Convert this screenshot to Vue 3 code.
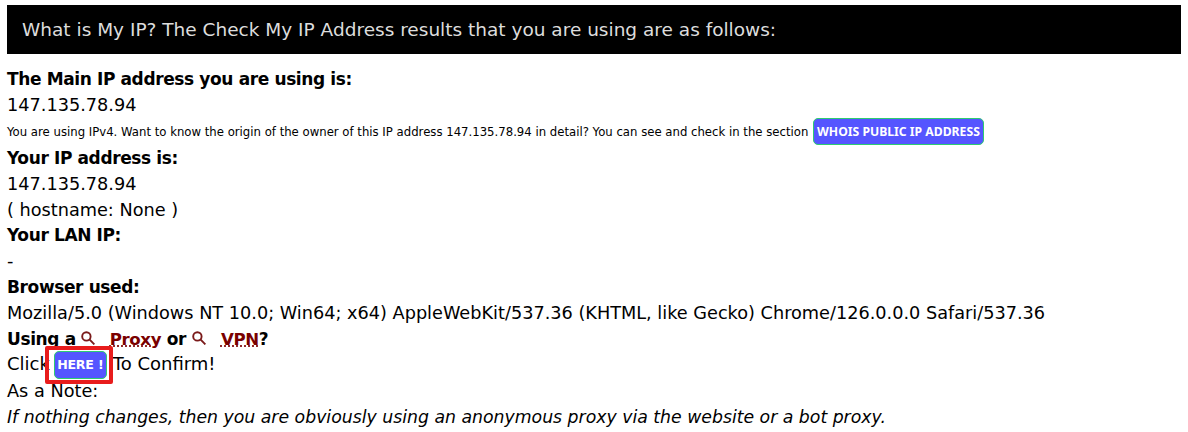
<template>
  <div class="page">
    <h1 class="banner">What is My IP? The Check My IP Address results that you are using are as follows:</h1>
    <div class="line"><b>The Main IP address you are using is:</b></div>
    <div class="line">147.135.78.94</div>
    <div class="line small">
      You are using IPv4. Want to know the origin of the owner of this IP address 147.135.78.94 in detail? You can see and check in the section
      <a class="btn whois">WHOIS PUBLIC IP ADDRESS</a>
    </div>
    <div class="line shift"><b>Your IP address is:</b></div>
    <div class="line shift">147.135.78.94</div>
    <div class="line shift">( hostname: None )</div>
    <div class="line"><b>Your LAN IP:</b></div>
    <div class="line">-</div>
    <div class="line"><b>Browser used:</b></div>
    <div class="line">{{ userAgent }}</div>
    <div class="line">
      <b>Using a</b>
      <template v-for="(term, i) in terms" :key="term">
        <svg class="glass" width="14" height="14" viewBox="0 0 14 14">
          <circle cx="5.4" cy="5.4" r="4.2" />
          <path d="M8.4 8.4 L13.4 13.4" />
        </svg>
        <abbr class="term">{{ term }}</abbr><b>{{ i === 0 ? ' or' : '?' }}</b>
      </template>
    </div>
    <div class="line confirm">
      Click
      <span class="here-wrap">
        <a class="btn here">HERE !</a>
      </span>
      To Confirm!
    </div>
    <div class="line">As a Note:</div>
    <div class="line"><i>If nothing changes, then you are obviously using an anonymous proxy via the website or a bot proxy.</i></div>
  </div>
</template>

<script setup>
const userAgent = 'Mozilla/5.0 (Windows NT 10.0; Win64; x64) AppleWebKit/537.36 (KHTML, like Gecko) Chrome/126.0.0.0 Safari/537.36'
const terms = ['Proxy', 'VPN']
</script>

<style>
body { background: #fff; }
</style>

<style scoped>
.page {
  padding: 5px 7px 0;
  font-family: "DejaVu Sans", sans-serif;
  font-size: 17.7px;
  line-height: 26px;
  color: #000;
}
.banner {
  margin: 0 0 12px;
  padding: 12px 15px;
  background: #000;
  color: #ddd;
  font-size: 18.5px;
  font-weight: normal;
  line-height: 25px;
}
.line { white-space: nowrap; height: 26px; }
.shift { position: relative; top: 1px; }
.confirm { position: relative; top: -1px; font-size: 18px; }
.line b { font-size: 17px; letter-spacing: -0.38px; }
.line i { font-size: 17.3px; }
.small { font-size: 11.7px; line-height: 24px; }
.btn {
  display: inline-block;
  background: #5555ff;
  color: #fff;
  font-weight: bold;
  border: 1px solid #2ecc71;
  border-radius: 5px;
}
.whois { font-family: "Noto Sans", sans-serif; font-size: 12.2px; line-height: 25px; padding: 0 3px; margin-left: 1px; }
.here { font-size: 12.6px; letter-spacing: -0.2px; line-height: 26px; padding: 0 2.5px; vertical-align: top; }
.here-wrap { position: relative; margin-left: -2px; display: inline-block; }
.here-wrap::after {
  content: "";
  position: absolute;
  left: -9px;
  top: -5px;
  right: -6px;
  bottom: -5px;
  border: 4px solid #e81c1c;
  border-radius: 2px;
  pointer-events: none;
}
.glass { margin: 0 15px 0 5px; }
.term + b + .glass { margin-left: 6px; }
.glass circle, .glass path { fill: none; stroke: #7a1a1a; stroke-width: 1.9; }
.term {
  font-size: 16.6px;
  letter-spacing: -0.38px;
  font-weight: bold;
  color: #7a0000;
  text-decoration: underline dotted #7a0000;
}
</style>
